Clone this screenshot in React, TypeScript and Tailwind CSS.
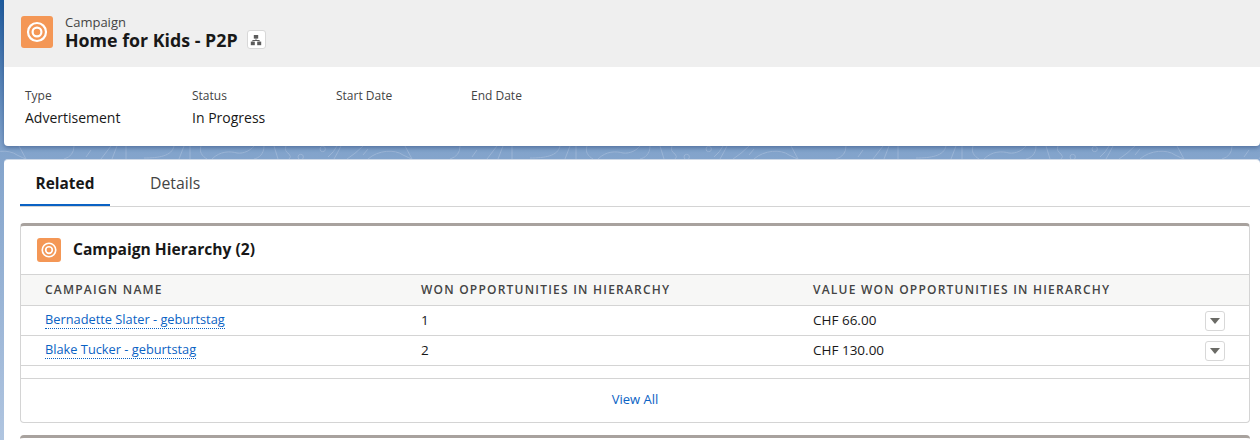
function TargetIcon({ box }: { box: string }) {
    return (
        <div className={`${box} flex items-center justify-center rounded-[3px] bg-[#f49756]`}>
            <svg viewBox="0 0 32 32" className="w-full h-full">
                <circle cx="16" cy="16" r="9" fill="none" stroke="#fff" strokeWidth="2.2" />
                <circle cx="16" cy="16" r="4.4" fill="none" stroke="#fff" strokeWidth="2.2" />
            </svg>
        </div>
    )
}

// the contour pattern repeats every 386px along the strip between the two panels
function Swirls() {
    return (
        <svg className="absolute left-0 top-[146px] h-[14px] w-[1260px]" viewBox="0 0 1260 14" fill="none" stroke="#9bb5d6" strokeWidth="1">
            {[-86, 300, 686, 1072].map((x) => (
                <g key={x} transform={`translate(${x} 0)`}>
                    <circle cx="22.7" cy="3" r="2.7" />
                    <circle cx="386.7" cy="11" r="2.7" />
                    <path d="M28 11Q34 6 37 0M34 13Q38 6 41 0M47 13Q55 8 63 0M63 9L68 3M68 13C78 4 95 3 103 9Q109 12 112 13M105 0L112 13" />
                    <path d="M160 0Q160 10 150 13M172 11L177 4M187 13L197 0M198 13L203 0M212 13V0M230 12C245 12 258 10 260 0M265 13L270 0M276 13V0" />
                    <path d="M287 0C285 6 288 10 293 13M298 13C306 5 316 5 323 7C330 8 337 4 340 0M350 0C350 8 345 12 340 13M360 0L364 13M372 0Q370 5 375 8Q378 11 375 13" />
                </g>
            ))}
        </svg>
    )
}

const rows = [
    { name: "Bernadette Slater - geburtstag", won: "1", value: "CHF 66.00" },
    { name: "Blake Tucker - geburtstag", won: "2", value: "CHF 130.00" },
]

export default function App() {
    return (
        <div className="relative h-[440px] w-[1260px] overflow-hidden bg-linear-to-b from-[#1d5c9e] via-[#82a3cb] via-[34%] to-[#b0c5e0] font-['Open_Sans',sans-serif] text-[#181818]">
            <Swirls />
            <div className="relative pl-1">
                <div className="h-[146px] overflow-hidden rounded-b-[4px] bg-white shadow-[0_2px_4px_rgba(30,60,110,0.45)]">
                    <div className="flex h-[67px] items-center bg-[#efefef] pl-[17px] pb-[3px]">
                        <TargetIcon box="w-8 h-8" />
                        <div className="ml-3">
                            <div className="text-[13px] leading-[15px] text-[#444]">Campaign</div>
                            <div className="flex items-center">
                                <span className="text-[17.8px] leading-[20px] font-bold">Home for Kids - P2P</span>
                                <button className="ml-[9px] flex h-[19px] w-[19px] items-center justify-center rounded-[3px] border border-[#d8d8d8] bg-white">
                                    <svg viewBox="0 0 12 12" className="h-[12px] w-[12px]" fill="#5c5c5c">
                                        <rect x="3.8" y="1" width="4.4" height="3.6" />
                                        <rect x="0.8" y="7.6" width="4" height="3.6" />
                                        <rect x="7.2" y="7.6" width="4" height="3.6" />
                                        <path d="M5.6 4.6h.8v1.5h3.2v1.5h-.8V6.9H3.2v.7h-.8V6.1h3.2z" />
                                    </svg>
                                </button>
                            </div>
                        </div>
                    </div>
                    <div className="flex pl-[21px] pt-[21px]">
                        <div className="w-[167px]">
                            <div className="text-xs leading-4 text-[#444]">Type</div>
                            <div className="mt-1 text-sm leading-5">Advertisement</div>
                        </div>
                        <div className="w-[144px]">
                            <div className="text-xs leading-4 text-[#444]">Status</div>
                            <div className="mt-1 text-sm leading-5">In Progress</div>
                        </div>
                        <div className="w-[135px] text-xs leading-4 text-[#444]">Start Date</div>
                        <div className="text-xs leading-4 text-[#444]">End Date</div>
                    </div>
                </div>
            </div>
            <div className="relative mt-[13px] ml-[3.5px] h-[281px] rounded-t-[4px] border-t border-[#cfd9e7] bg-white pl-[16.5px] pr-[10px]">
                <div className="flex h-[47px] border-b border-[#d4d4d4]">
                    <div className="flex h-[46px] w-[90px] items-center justify-center border-b-2 border-[#0a62c4] pt-[3px] text-[15.4px] font-bold">Related</div>
                    <div className="ml-[40px] flex h-[46px] items-center pt-[2px] text-[15.8px] text-[#444]">Details</div>
                </div>
                <div className="mt-4 h-[200px] rounded-[4px] border border-t-[3px] border-[#d4d4d4] border-t-[#a8a29e]">
                    <div className="flex h-[48px] items-center pl-4">
                        <TargetIcon box="w-6 h-6" />
                        <h2 className="ml-3 text-[15.6px] font-bold">Campaign Hierarchy (2)</h2>
                    </div>
                    <div className="grid h-[32px] grid-cols-[376px_392px_1fr] items-center border-y border-[#d4d4d4] bg-[#f7f7f6] pl-6 text-xs font-semibold tracking-[1.22px] text-[#444]">
                        <div>CAMPAIGN NAME</div>
                        <div>WON OPPORTUNITIES IN HIERARCHY</div>
                        <div>VALUE WON OPPORTUNITIES IN HIERARCHY</div>
                    </div>
                    {rows.map((row) => (
                        <div key={row.name} className="grid h-[30px] grid-cols-[376px_392px_1fr_44px] items-center border-b border-[#d4d4d4] pl-6 text-[13.5px]">
                            <div className="pb-[3px] leading-[18px]"><a className="border-b border-dotted border-[#0a62c4] text-[12.8px] text-[#0a62c4]">{row.name}</a></div>
                            <div>{row.won}</div>
                            <div>{row.value}</div>
                            <button className="flex h-5 w-5 items-center justify-center rounded-[3px] border border-[#d8d8d8]">
                                <svg viewBox="0 0 10 6" className="h-[6px] w-[10px]" fill="#6b6b66"><path d="M0 0h10L5 6z" /></svg>
                            </button>
                        </div>
                    ))}
                    <div className="h-[13px] border-b border-[#d4d4d4]" />
                    <div className="flex h-[42px] items-center justify-center text-[13px] text-[#0a62c4]">View All</div>
                </div>
                <div className="mt-[12px] h-3 rounded-t-[4px] border-t-[3px] border-[#a8a29e]" />
            </div>
        </div>
    )
}
